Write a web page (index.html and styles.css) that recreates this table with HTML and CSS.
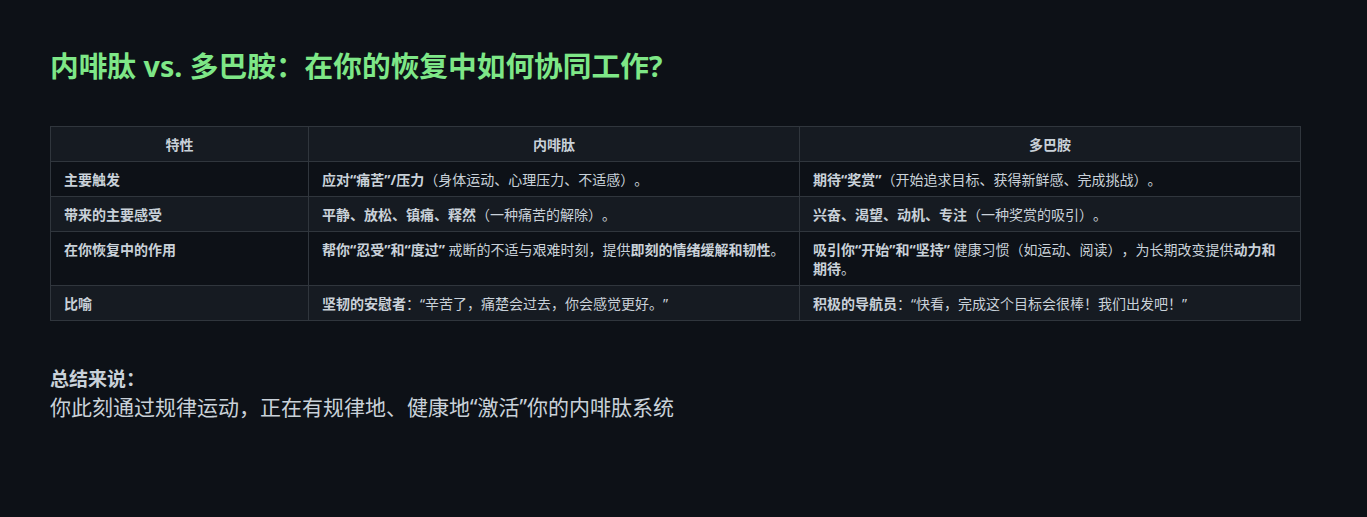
FILE: index.html
```html
<!DOCTYPE html>
<html lang="zh-CN">
<head>
<meta charset="utf-8">
<title>内啡肽 vs. 多巴胺</title>
<link rel="stylesheet" href="styles.css">
</head>
<body>
<main class="page">
  <h1 class="title">内啡肽 vs. 多巴胺：在你的恢复中如何协同工作?</h1>
  <table class="compare">
    <colgroup>
      <col class="c1">
      <col class="c2">
      <col class="c3">
    </colgroup>
    <thead>
      <tr><th>特性</th><th>内啡肽</th><th>多巴胺</th></tr>
    </thead>
    <tbody>
      <tr>
        <td class="key">主要触发</td>
        <td><strong>应对“痛苦”/压力</strong>（身体运动、心理压力、不适感）。</td>
        <td><strong>期待“奖赏”</strong>（开始追求目标、获得新鲜感、完成挑战）。</td>
      </tr>
      <tr>
        <td class="key">带来的主要感受</td>
        <td><strong>平静、放松、镇痛、释然</strong>（一种痛苦的解除）。</td>
        <td><strong>兴奋、渴望、动机、专注</strong>（一种奖赏的吸引）。</td>
      </tr>
      <tr>
        <td class="key">在你恢复中的作用</td>
        <td><strong>帮你“忍受”和“度过”</strong> 戒断的不适与艰难时刻，提供<strong>即刻的情绪缓解和韧性</strong>。</td>
        <td><strong>吸引你“开始”和“坚持”</strong> 健康习惯（如运动、阅读），为长期改变提供<strong>动力和期待</strong>。</td>
      </tr>
      <tr>
        <td class="key">比喻</td>
        <td><strong>坚韧的安慰者</strong>：“辛苦了，痛楚会过去，你会感觉更好。”</td>
        <td><strong>积极的导航员</strong>：“快看，完成这个目标会很棒！我们出发吧！”</td>
      </tr>
    </tbody>
  </table>
  <section class="summary">
    <p class="summary-label">总结来说：</p>
    <p class="summary-text">你此刻通过规律运动，正在有规律地、健康地“激活”你的内啡肽系统</p>
  </section>
</main>
</body>
</html>
```

FILE: styles.css
```css
html, body {
  margin: 0;
  padding: 0;
  background: #0d1117;
}

body {
  font-family: "Noto Sans", "Noto Sans CJK SC", "Liberation Sans", sans-serif;
  color: #c9d1d9;
  text-spacing-trim: space-all;
}

.page {
  padding: 47px 50px 40px 50px;
}

.title {
  margin: 0;
  font-size: 28.7px;
  line-height: 38px;
  font-weight: 700;
  color: #7ee787;
}

.compare {
  margin-top: 41px;
  width: 1250px;
  border-collapse: collapse;
  table-layout: fixed;
  font-size: 14px;
  line-height: 19px;
}

.c1 { width: 258px; }
.c2 { width: 491px; }
.c3 { width: 501px; }

.compare th,
.compare td {
  border: 1px solid #30363d;
  padding: 7.5px 13px;
  text-align: left;
  vertical-align: top;
}

.compare th {
  background: #161b22;
  text-align: center;
  font-weight: 700;
}

.compare tbody tr:nth-child(odd) { background: #0d1117; }
.compare tbody tr:nth-child(even) { background: #161b22; }

.compare strong { font-weight: 700; }
.compare td { font-weight: 400; }
.compare td.key { font-weight: 700; }

.summary {
  margin-top: 45px;
}

.summary p { margin: 0; }

.summary-label {
  font-size: 19px;
  line-height: 26px;
  font-weight: 700;
}

.summary-text {
  font-size: 21px;
  line-height: 30px;
}
```
